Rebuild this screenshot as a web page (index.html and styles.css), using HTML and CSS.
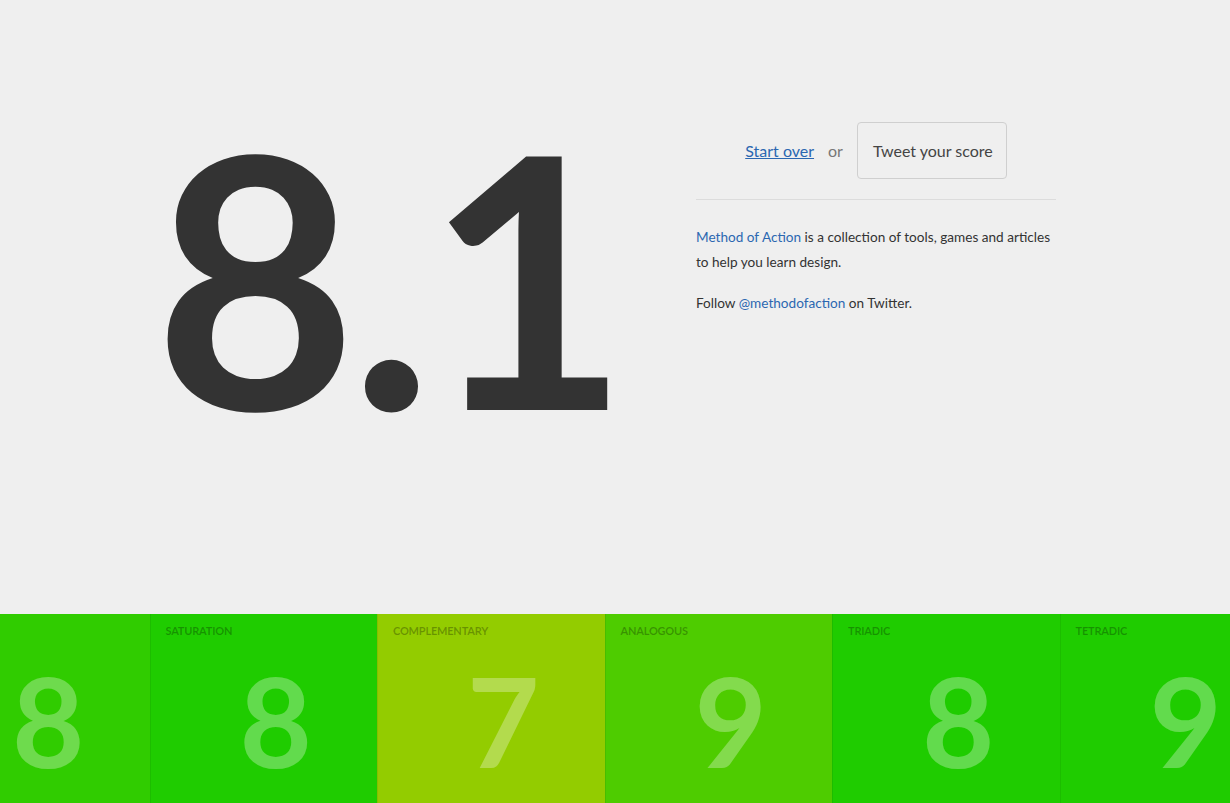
FILE: index.html
```html
<!DOCTYPE html>
<html>
<head>
<meta charset="utf-8">
<link rel="stylesheet" href="styles.css">
</head>
<body>
<main class="result">
  <div class="score">8.1</div>
  <aside class="info">
    <div class="actions">
      <a class="start" href="#">Start over</a>
      <span class="or">or</span>
      <button class="tweet">Tweet your score</button>
    </div>
    <p class="about"><a href="#">Method of Action</a> is a collection of tools, games and articles to help you learn design.</p>
    <p class="follow">Follow <a href="#">@methodofaction</a> on Twitter.</p>
  </aside>
</main>
<section class="tiles">
  <div class="tile t-hue"><span class="num">8</span></div>
  <div class="tile t-sat"><span class="label">Saturation</span><span class="num">8</span></div>
  <div class="tile t-comp"><span class="label">Complementary</span><span class="num">7</span></div>
  <div class="tile t-ana"><span class="label">Analogous</span><span class="num">9</span></div>
  <div class="tile t-tri"><span class="label">Triadic</span><span class="num">8</span></div>
  <div class="tile t-tet"><span class="label">Tetradic</span><span class="num">9</span></div>
</section>
</body>
</html>
```
FILE: styles.css
```css
html, body {
  margin: 0;
  padding: 0;
}
body {
  background: #efefef;
  color: #333;
  font-family: Lato, "Open Sans", sans-serif;
  overflow: hidden;
  height: 803px;
}
.result {
  height: 614px;
  display: grid;
  grid-template-columns: 516px 360px;
  column-gap: 50px;
  padding-left: 130px;
  box-sizing: border-box;
}
.score {
  font-weight: 700;
  font-size: 350px;
  line-height: 1;
  text-align: center;
  letter-spacing: -7px;
  padding-top: 100px;
  color: #333;
}
.info {
  padding-top: 122px;
}
.actions {
  display: flex;
  justify-content: center;
  align-items: center;
  gap: 14px;
  padding-bottom: 20px;
  border-bottom: 1px solid #dcdcdc;
}
.start {
  color: #2b67b1;
  font-size: 16px;
  text-decoration: underline;
}
.or {
  color: #777;
  font-size: 16px;
}
.tweet {
  font-family: inherit;
  font-size: 16px;
  color: #444;
  background: #efefef;
  border: 1px solid #cfcfcf;
  border-radius: 4px;
  height: 57px;
  padding: 0 13px 0 15px;
}
.about, .follow {
  margin: 0;
  font-size: 13.6px;
  line-height: 25px;
  color: #333;
}
.about {
  margin-top: 25px;
}
.follow {
  margin-top: 16px;
}
.about a, .follow a {
  color: #2b67b1;
  text-decoration: none;
}
.tiles {
  display: flex;
  height: 189px;
  margin-left: -78px;
  overflow: hidden;
}
.tile {
  flex: 0 0 227.5px;
  position: relative;
  box-sizing: border-box;
  border-left: 1px solid rgba(0,0,0,0.07);
  overflow: hidden;
}
.label {
  position: absolute;
  left: 15px;
  top: 10px;
  font-size: 11px;
  font-weight: 700;
  text-transform: uppercase;
  color: rgba(0,0,0,0.28);
  letter-spacing: -0.2px;
}
.num {
  display: block;
  text-align: center;
  padding-left: 24px;
  font-size: 125px;
  font-weight: 700;
  line-height: 1;
  margin-top: 44px;
  color: rgba(255,255,255,0.3);
}
.t-hue { background: #30cc00; }
.t-sat { background: #1fcc00; }
.t-comp { background: #93cc00; }
.t-ana { background: #4ecc00; }
.t-tri { background: #1fcc00; }
.t-tet { background: #1fcc00; }
```
